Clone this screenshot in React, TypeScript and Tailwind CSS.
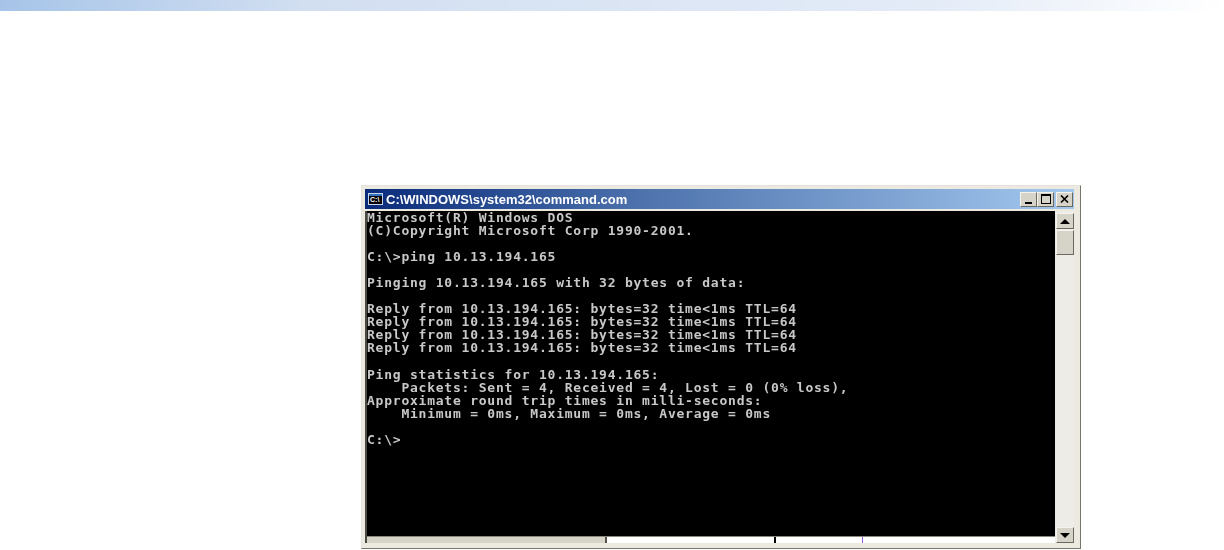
import React from "react";

const consoleLines = [
  "Microsoft(R) Windows DOS",
  "(C)Copyright Microsoft Corp 1990-2001.",
  "",
  "C:\\>ping 10.13.194.165",
  "",
  "Pinging 10.13.194.165 with 32 bytes of data:",
  "",
  "Reply from 10.13.194.165: bytes=32 time<1ms TTL=64",
  "Reply from 10.13.194.165: bytes=32 time<1ms TTL=64",
  "Reply from 10.13.194.165: bytes=32 time<1ms TTL=64",
  "Reply from 10.13.194.165: bytes=32 time<1ms TTL=64",
  "",
  "Ping statistics for 10.13.194.165:",
  "    Packets: Sent = 4, Received = 4, Lost = 0 (0% loss),",
  "Approximate round trip times in milli-seconds:",
  "    Minimum = 0ms, Maximum = 0ms, Average = 0ms",
  "",
  "C:\\>",
];

const bevel =
  "border border-t-[#f4f3ee] border-l-[#f4f3ee] border-r-[#6b695f] border-b-[#6b695f] bg-[#d6d3c8]";

const CmdIcon: React.FC = () => (
  <div className="w-[15px] h-[12px] bg-[#0b2f7a] flex flex-col shrink-0 border border-[#c8d4e8]">
    <div className="h-[2px] bg-[#2f6fc0]" />
    <div className="flex-1 bg-black text-white text-[7px] leading-[8px] font-bold font-['Liberation_Sans',sans-serif] pl-px">
      C:\
    </div>
  </div>
);

const CaptionButton: React.FC<{ children: React.ReactNode }> = ({ children }) => (
  <div
    className={`w-[17px] h-[15px] flex items-center justify-center relative ${bevel}`}
  >
    {children}
  </div>
);

const App: React.FC = () => {
  return (
    <div className="w-[1224px] h-[550px] bg-white overflow-hidden flex flex-col">
      <div className="h-[11px] shrink-0 bg-[linear-gradient(90deg,#a6c4e8_0%,#d2dff1_25%,#e3ebf7_76%,#ffffff_100%)]" />

      <div className="pt-[174px] pl-[361px]">
        <div className="w-[720px] h-[364px] flex flex-col bg-[#ece9e0] border border-t-[#e4e2da] border-l-[#e4e2da] border-r-[#77756c] border-b-[#77756c] pt-[3px] pl-[3px] pr-[6px] pb-[5px]">
          <div className="h-[20px] shrink-0 flex items-center pl-[3px] pr-[1px] gap-[3px] bg-gradient-to-r from-[#0a2a7a] via-[#4f74ae] via-40% to-[#a4c9ef]">
            <CmdIcon />
            <span className="text-white text-[13px] font-bold font-['Liberation_Sans',sans-serif] leading-none blur-[0.3px]">
              C:\WINDOWS\system32\command.com
            </span>
            <div className="ml-auto flex items-center">
              <CaptionButton>
                <div className="absolute left-[4px] bottom-[2px] w-[7px] h-[2px] bg-black" />
              </CaptionButton>
              <CaptionButton>
                <div className="w-[10px] h-[10px] border border-black border-t-2" />
              </CaptionButton>
              <div className="ml-[2px]">
                <CaptionButton>
                  <svg width="9" height="8" viewBox="0 0 9 8">
                    <path d="M1 0.5 L8 7.5 M8 0.5 L1 7.5" stroke="#000" strokeWidth="1.6" />
                  </svg>
                </CaptionButton>
              </div>
            </div>
          </div>

          <div className="flex-1 mt-[2px] flex min-h-0 border-l-2 border-[#4a4943]">
            <div className="flex-1 flex flex-col min-w-0">
              <div className="flex-1 bg-black overflow-hidden min-h-0">
                <pre className="text-[#c8c8c8] font-['DejaVu_Sans_Mono',monospace] font-bold text-[13px] tracking-[0.77px] leading-[13.05px] blur-[0.35px]">
                  {consoleLines.map((line, i) => (
                    <div key={i} className="h-[13.05px]">
                      {line}
                    </div>
                  ))}
                </pre>
              </div>
              <div className="h-[7px] shrink-0 flex bg-white border-t border-[#8b897f]">
                <div className="w-[240px] bg-[#d6d3c8] border-r-2 border-[#55534a]" />
                <div className="w-[169px] border-r-2 border-black" />
                <div className="w-[87px] border-r border-[#9a5ae0]" />
              </div>
            </div>

            <div className="w-[19px] shrink-0 flex flex-col bg-[#eeece6] pl-px">
              <div className={`h-[16px] mt-[2px] flex items-center justify-center ${bevel}`}>
                <div className="w-0 h-0 border-x-[5px] border-x-transparent border-b-[5px] border-b-black" />
              </div>
              <div className={`h-[25px] mt-px ${bevel}`} />
              <div className="flex-1" />
              <div className={`h-[16px] flex items-center justify-center ${bevel}`}>
                <div className="w-0 h-0 border-x-[5px] border-x-transparent border-t-[5px] border-t-black" />
              </div>
            </div>
          </div>
        </div>
      </div>
    </div>
  );
};

export default App;
